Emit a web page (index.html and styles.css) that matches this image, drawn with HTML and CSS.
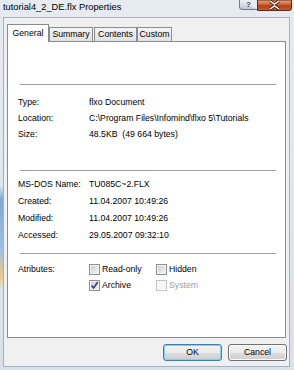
FILE: index.html
```html
<!DOCTYPE html>
<html>
<head>
<meta charset="utf-8">
<link rel="stylesheet" href="styles.css">
</head>
<body>
<div class="window">
  <div class="titlebar">
    <span class="title">tutorial4_2_DE.flx Properties</span>
    <div class="caption">
      <svg class="cbtn" width="18" height="10" viewBox="0 0 18 10">
        <defs><linearGradient id="hg" x1="0" y1="0" x2="0" y2="1"><stop offset="0" stop-color="#eef2f6"/><stop offset="1" stop-color="#b9c5d3"/></linearGradient></defs>
        <path d="M0.5 0 V7 Q0.5 9.5 3 9.5 H18" fill="url(#hg)" stroke="#6f7c8c"/>
        <text x="9.5" y="7" font-family="Liberation Sans, Arial, sans-serif" font-size="8" font-weight="bold" fill="#3c4756" text-anchor="middle">?</text>
      </svg>
      <svg class="cbtn" width="35" height="11" viewBox="0 0 35 11">
        <defs><linearGradient id="cg" x1="0" y1="0" x2="0" y2="1"><stop offset="0" stop-color="#e9a47c"/><stop offset="0.4" stop-color="#d3683d"/><stop offset="0.55" stop-color="#b8431c"/><stop offset="1" stop-color="#c65a2c"/></linearGradient></defs>
        <path d="M0.5 0 V10.5 H32 Q34.5 10.5 34.5 8 V0 Z" fill="url(#cg)" stroke="#5e2c18"/>
        <path d="M13 1 L17.5 4 L22 1 M13 9 L17.5 6 L22 9" stroke="#4a1a0c" stroke-width="3.2" fill="none"/>
        <path d="M13 1 L17.5 4 L22 1 M13 9 L17.5 6 L22 9" stroke="#fff" stroke-width="1.5" fill="none"/>
      </svg>
    </div>
  </div>
  <div class="client">
    <div class="tabs">
      <div class="tab active t1">General</div>
      <div class="tab t2">Summary</div>
      <div class="tab t3">Contents</div>
      <div class="tab t4">Custom</div>
    </div>
    <div class="panel">
      <div class="top-space"></div>
      <div class="sep"></div>
      <div class="rows r16 g1">
        <span>Type:</span><span>flxo Document</span>
        <span>Location:</span><span>C:\Program Files\Infomind\flxo 5\Tutorials</span>
        <span>Size:</span><span>48.5KB&nbsp; (49 664 bytes)</span>
      </div>
      <div class="sep s2"></div>
      <div class="rows r17 g2">
        <span>MS-DOS Name:</span><span>TU085C~2.FLX</span>
        <span>Created:</span><span>11.04.2007 10:49:26</span>
        <span>Modified:</span><span>11.04.2007 10:49:26</span>
        <span>Accessed:</span><span>29.05.2007 09:32:10</span>
      </div>
      <div class="sep s3"></div>
      <div class="rows r16 g3">
        <span>Atributes:</span>
        <div class="checks">
          <label class="chk"><span class="box"></span>Read-only</label>
          <label class="chk"><span class="box"></span>Hidden</label>
          <label class="chk"><span class="box checked"><svg width="9" height="9" viewBox="0 0 9 9"><path d="M1.5 4.5 L3.6 7 L7.8 1" stroke="#2b3f7a" stroke-width="1.6" fill="none"/></svg></span>Archive</label>
          <label class="chk disabled"><span class="box"></span>System</label>
        </div>
      </div>
    </div>
    <div class="buttons">
      <button class="btn default">OK</button>
      <button class="btn">Cancel</button>
    </div>
  </div>
</div>
</body>
</html>
```
FILE: styles.css
```css
* { box-sizing: border-box; }
html, body { margin: 0; padding: 0; }
body {
  width: 294px;
  height: 370px;
  overflow: hidden;
  font-family: "Liberation Sans", Arial, sans-serif;
  font-size: 8.7px;
  color: #000;
}
.window {
  width: 294px;
  height: 370px;
  background:
    linear-gradient(transparent 185px, #7fa6d6 200px, #9fc0e6 250px, #e8c98a 275px, transparent 290px) 0 0 / 3px 100% no-repeat,
    linear-gradient(#e6ebf1, #d9e1ea);
  display: flex;
  flex-direction: column;
}
.titlebar {
  height: 17px;
  display: flex;
  align-items: flex-start;
}
.title {
  padding-left: 3px;
  line-height: 15px;
  font-size: 9.3px;
  color: #000;
}
.caption {
  margin-left: auto;
  margin-right: 2px;
  display: flex;
  align-items: flex-start;
}
.cbtn {
  display: block;
  flex: none;
}
.client {
  margin-left: 3px;
  width: 287px;
  height: 350px;
  border: 1px solid #a6b1bd;
  background: #f0f0f0;
  display: flex;
  flex-direction: column;
}
.tabs {
  display: flex;
  align-items: flex-start;
  height: 18px;
  margin: 6px 0 -1px 3px;
  position: relative;
  z-index: 1;
}
.tab {
  height: 14px;
  margin-top: 3px;
  border: 1px solid #898c95;
  border-bottom: none;
  background: linear-gradient(#f4f4f4, #e2e2e2);
  text-align: center;
  line-height: 13px;
  white-space: nowrap;
}
.tab.active {
  height: 18px;
  margin-top: 0;
  background: #fff;
  line-height: 16px;
}
.t1 { width: 42px; }
.t2 { width: 44px; }
.t3 { width: 43px; margin-left: 1px; }
.t4 { width: 35px; }
.panel {
  margin: 0 3px;
  height: 297px;
  border: 1px solid #898c95;
  background: #fff;
}
.top-space { height: 42px; }
.sep {
  margin-left: 12px;
  width: 256px;
  height: 1px;
  background: #a0a0a0;
}
.s2 { margin-top: 28px; }
.s3 { margin-top: 9px; }
.rows {
  display: grid;
  grid-template-columns: 71px 1fr;
  padding-left: 10px;
  white-space: nowrap;
}
.r16 { grid-auto-rows: 16px; line-height: 16px; }
.r17 { grid-auto-rows: 17px; line-height: 17px; }
.g1 { margin-top: 9px; }
.g2 { margin-top: 5px; }
.g3 { margin-top: 7px; }
.g3 > span { grid-row: 1; }
.checks {
  display: grid;
  grid-template-columns: 67px auto;
  grid-auto-rows: 16px;
}
.chk {
  display: flex;
  align-items: center;
  gap: 2px;
}
.box {
  width: 11px;
  height: 11px;
  border: 1px solid #8e8f8f;
  background: linear-gradient(135deg, #c9cbce, #f6f6f6);
  box-shadow: inset 0 0 0 1px #f4f4f4;
  display: flex;
  align-items: center;
  justify-content: center;
}
.box svg { display: block; }
.chk.disabled { color: #a0a0a0; }
.chk.disabled .box {
  border-color: #c4c4c4;
  background: #f7f7f7;
  box-shadow: none;
}
.buttons {
  display: flex;
  justify-content: flex-end;
  gap: 6px;
  margin: 6px 2px 0 0;
}
.btn {
  width: 59px;
  height: 17px;
  padding: 0;
  border: 1px solid #707070;
  border-radius: 3px;
  background: linear-gradient(#f2f2f2 0%, #ebebeb 50%, #dddddd 51%, #cfcfcf 100%);
  box-shadow: inset 0 0 0 1px #fcfcfc;
  font-family: "Liberation Sans", Arial, sans-serif;
  font-size: 8.7px;
  color: #000;
  line-height: 15px;
}
.btn.default {
  border-color: #3c7fb1;
  box-shadow: inset 0 0 0 1px #7fd0f5;
}
```
